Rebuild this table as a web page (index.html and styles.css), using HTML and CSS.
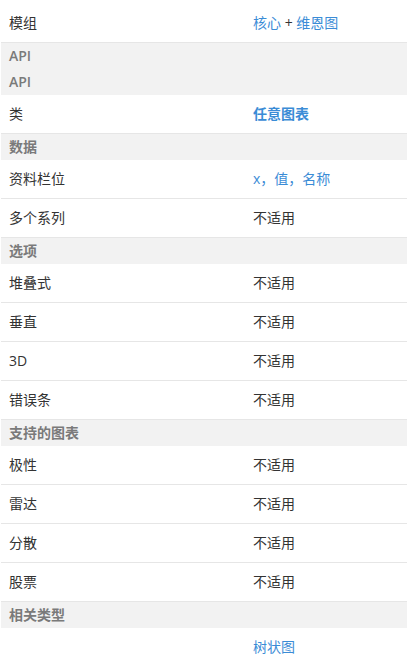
FILE: index.html
```html
<!DOCTYPE html>
<html lang="zh">
<head>
<meta charset="utf-8">
<link rel="stylesheet" href="styles.css">
</head>
<body>
<div class="table">
  <div class="row"><div class="cell">模组</div><div class="cell"><a class="link">核心</a> + <a class="link">维恩图</a></div></div>
  <div class="head">API</div>
  <div class="head">API</div>
  <div class="row"><div class="cell">类</div><div class="cell"><a class="link strong">任意图表</a></div></div>
  <div class="head">数据</div>
  <div class="row"><div class="cell">资料栏位</div><div class="cell"><a class="link">x，值，名称</a></div></div>
  <div class="row"><div class="cell">多个系列</div><div class="cell">不适用</div></div>
  <div class="head">选项</div>
  <div class="row"><div class="cell">堆叠式</div><div class="cell">不适用</div></div>
  <div class="row"><div class="cell">垂直</div><div class="cell">不适用</div></div>
  <div class="row"><div class="cell">3D</div><div class="cell">不适用</div></div>
  <div class="row"><div class="cell">错误条</div><div class="cell">不适用</div></div>
  <div class="head">支持的图表</div>
  <div class="row"><div class="cell">极性</div><div class="cell">不适用</div></div>
  <div class="row"><div class="cell">雷达</div><div class="cell">不适用</div></div>
  <div class="row"><div class="cell">分散</div><div class="cell">不适用</div></div>
  <div class="row"><div class="cell">股票</div><div class="cell">不适用</div></div>
  <div class="head">相关类型</div>
  <div class="row last"><div class="cell"></div><div class="cell"><a class="link">树状图</a></div></div>
</div>
</body>
</html>
```
FILE: styles.css
```css
html, body {
  margin: 0;
  padding: 0;
  background: #fff;
}
body {
  font-family: "Open Sans", "Noto Sans CJK SC", sans-serif;
  font-size: 14px;
  color: #333;
}
.table {
  margin: 4px 0 0 1px;
  display: flex;
  flex-direction: column;
}
.row {
  display: grid;
  grid-template-columns: 244px 1fr;
  height: 38px;
  align-items: center;
  border-bottom: 1px solid #e6e6e6;
}
.row.last {
  border-bottom: none;
}
.cell {
  padding: 0 8px;
  line-height: 20px;
}
.head {
  height: 26px;
  line-height: 26px;
  background: #f2f2f2;
  color: #7a7a7a;
  font-weight: 600;
  padding: 0 8px;
}
.link {
  color: #3b8cd6;
  text-decoration: none;
}
.link.strong {
  font-weight: 600;
}
```
